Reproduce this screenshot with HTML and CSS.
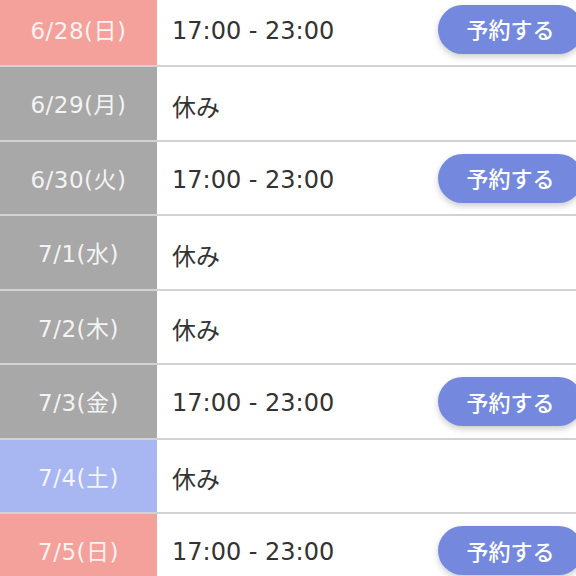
FILE: index.html
```html
<!DOCTYPE html>
<html lang="ja">
<head>
  <meta charset="UTF-8">
  <meta name="viewport" content="width=device-width, initial-scale=1.0">
  <title>営業日カレンダー</title>
  <link rel="stylesheet" href="styles.css">
</head>
<body>
  <div class="schedule">
    <div class="row">
      <div class="date sun">6/28(日)</div>
      <div class="cell"><span class="time">17:00 - 23:00</span><button class="reserve">予約する</button></div>
    </div>
    <div class="row">
      <div class="date">6/29(月)</div>
      <div class="cell"><span class="time">休み</span></div>
    </div>
    <div class="row">
      <div class="date">6/30(火)</div>
      <div class="cell"><span class="time">17:00 - 23:00</span><button class="reserve">予約する</button></div>
    </div>
    <div class="row">
      <div class="date">7/1(水)</div>
      <div class="cell"><span class="time">休み</span></div>
    </div>
    <div class="row">
      <div class="date">7/2(木)</div>
      <div class="cell"><span class="time">休み</span></div>
    </div>
    <div class="row">
      <div class="date">7/3(金)</div>
      <div class="cell"><span class="time">17:00 - 23:00</span><button class="reserve">予約する</button></div>
    </div>
    <div class="row">
      <div class="date sat">7/4(土)</div>
      <div class="cell"><span class="time">休み</span></div>
    </div>
    <div class="row">
      <div class="date sun">7/5(日)</div>
      <div class="cell"><span class="time">17:00 - 23:00</span><button class="reserve">予約する</button></div>
    </div>
  </div>
</body>
</html>
```
FILE: styles.css
```css
body {
  margin: 0;
  font-family: "DejaVu Sans", "Noto Sans CJK JP", sans-serif;
  background-color: #fff;
  overflow: hidden;
}
.schedule {
  width: 583px;
  margin-top: -7.5px;
}
.row {
  display: flex;
  height: 72.5px;
  border-bottom: 2px solid #d2d2d2;
}
.date {
  width: 157px;
  flex-shrink: 0;
  display: flex;
  align-items: center;
  justify-content: center;
  background-color: #a8a8a8;
  color: rgba(255,255,255,0.88);
  font-size: 23px;
  letter-spacing: 0.5px;
}
.date.sun {
  background-color: #f4a19c;
}
.date.sat {
  background-color: #a8b7f1;
}
.cell {
  flex: 1;
  display: flex;
  align-items: center;
  justify-content: space-between;
  padding-left: 15px;
}
.time {
  padding-top: 4px;
  color: #333;
  font-size: 24px;
}
.reserve {
  width: 145px;
  height: 49px;
  margin-top: 1px;
  padding-bottom: 3px;
  border: none;
  border-radius: 25px;
  background-color: #7489de;
  color: #fff;
  font-family: "Noto Sans CJK JP", sans-serif;
  font-size: 22px;
  font-weight: 500;
  box-shadow: 0 3px 6px rgba(0,0,0,0.2);
  cursor: pointer;
}
```
